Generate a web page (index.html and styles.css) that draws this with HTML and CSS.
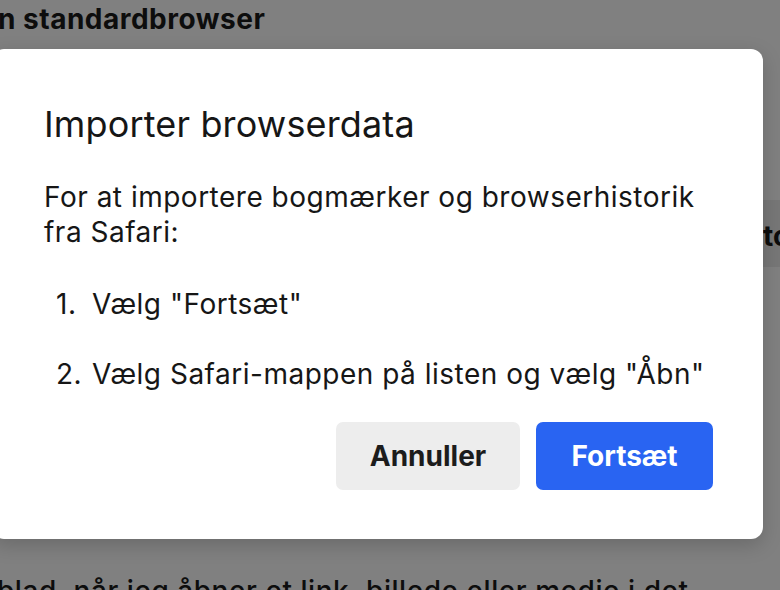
FILE: index.html
```html
<!DOCTYPE html>
<html lang="da">
<head>
<meta charset="utf-8">
<title>Importer browserdata</title>
<link rel="stylesheet" href="styles.css">
</head>
<body>
<div class="page">
  <h2 class="heading">n standardbrowser</h2>
  <div class="band"><span class="band-text">to</span></div>
  <p class="bottom-text">blad, når jeg åbner et link, billede eller medie i det</p>
</div>
<div class="dialog" role="dialog" aria-labelledby="dlg-title">
  <h1 class="dialog-title" id="dlg-title">Importer browserdata</h1>
  <p class="dialog-text">For at importere bogmærker og browserhistorik fra Safari:</p>
  <ol class="steps">
    <li>Vælg "Fortsæt"</li>
    <li>Vælg Safari-mappen på listen og vælg "Åbn"</li>
  </ol>
  <div class="actions">
    <button class="btn btn-cancel">Annuller</button>
    <button class="btn btn-primary">Fortsæt</button>
  </div>
</div>
</body>
</html>
```
FILE: styles.css
```css
html, body {
  margin: 0;
  padding: 0;
  overflow: hidden;
  height: 100%;
}
body {
  background: #808080;
  font-family: Inter, "Noto Sans", "Liberation Sans", sans-serif;
  color: #000;
  position: relative;
}
.page {
  display: flex;
  flex-direction: column;
}
.heading {
  margin: 1px 0 0 -2px;
  font-size: 28px;
  font-weight: 700;
  line-height: 36px;
  letter-spacing: 0.5px;
  color: #0d0d0d;
  white-space: nowrap;
}
.band {
  margin-top: 163px;
  height: 67px;
  background: #777777;
  display: flex;
  align-items: center;
  justify-content: flex-end;
}
.band-text {
  font-size: 28px;
  font-weight: 700;
  color: #0d0d0d;
  width: 17px;
  overflow: hidden;
  white-space: nowrap;
  padding-top: 4px;
}
.bottom-text {
  margin: 306px 0 0 -3px;
  font-size: 28px;
  font-weight: 500;
  line-height: 36px;
  letter-spacing: 0.55px;
  color: #0d0d0d;
  white-space: nowrap;
}
.dialog {
  position: absolute;
  left: -8px;
  top: 49px;
  width: 771px;
  height: 490px;
  box-sizing: border-box;
  padding: 53px 50px 0 52px;
  background: #ffffff;
  border-radius: 12px;
  box-shadow: 0 6px 20px rgba(0, 0, 0, 0.18);
  color: #161616;
}
.dialog-title {
  margin: 0;
  font-size: 36px;
  font-weight: 400;
  line-height: 44px;
  letter-spacing: 0.15px;
}
.dialog-text {
  margin: 34px 0 0;
  font-size: 28px;
  line-height: 35px;
  letter-spacing: 0.5px;
}
.steps {
  margin: 37px 0 0;
  padding: 0 0 0 12px;
  list-style: none;
  counter-reset: step;
  font-size: 28px;
  line-height: 35px;
  letter-spacing: 0.5px;
}
.steps li {
  counter-increment: step;
  white-space: nowrap;
}
.steps li::before {
  content: counter(step) ".";
  display: inline-block;
  width: 36px;
}
.steps li + li {
  margin-top: 35px;
}
.actions {
  margin-top: 30px;
  display: flex;
  justify-content: flex-end;
  gap: 16px;
}
.btn {
  height: 68px;
  border: none;
  border-radius: 7px;
  font-family: Inter, "Noto Sans", "Liberation Sans", sans-serif;
  font-size: 28px;
  font-weight: 700;
  padding: 0;
}
.btn-cancel {
  width: 184px;
  background: #ededed;
  color: #1c1c1c;
}
.btn-primary {
  width: 177px;
  background: #2964f2;
  color: #ffffff;
}
```
